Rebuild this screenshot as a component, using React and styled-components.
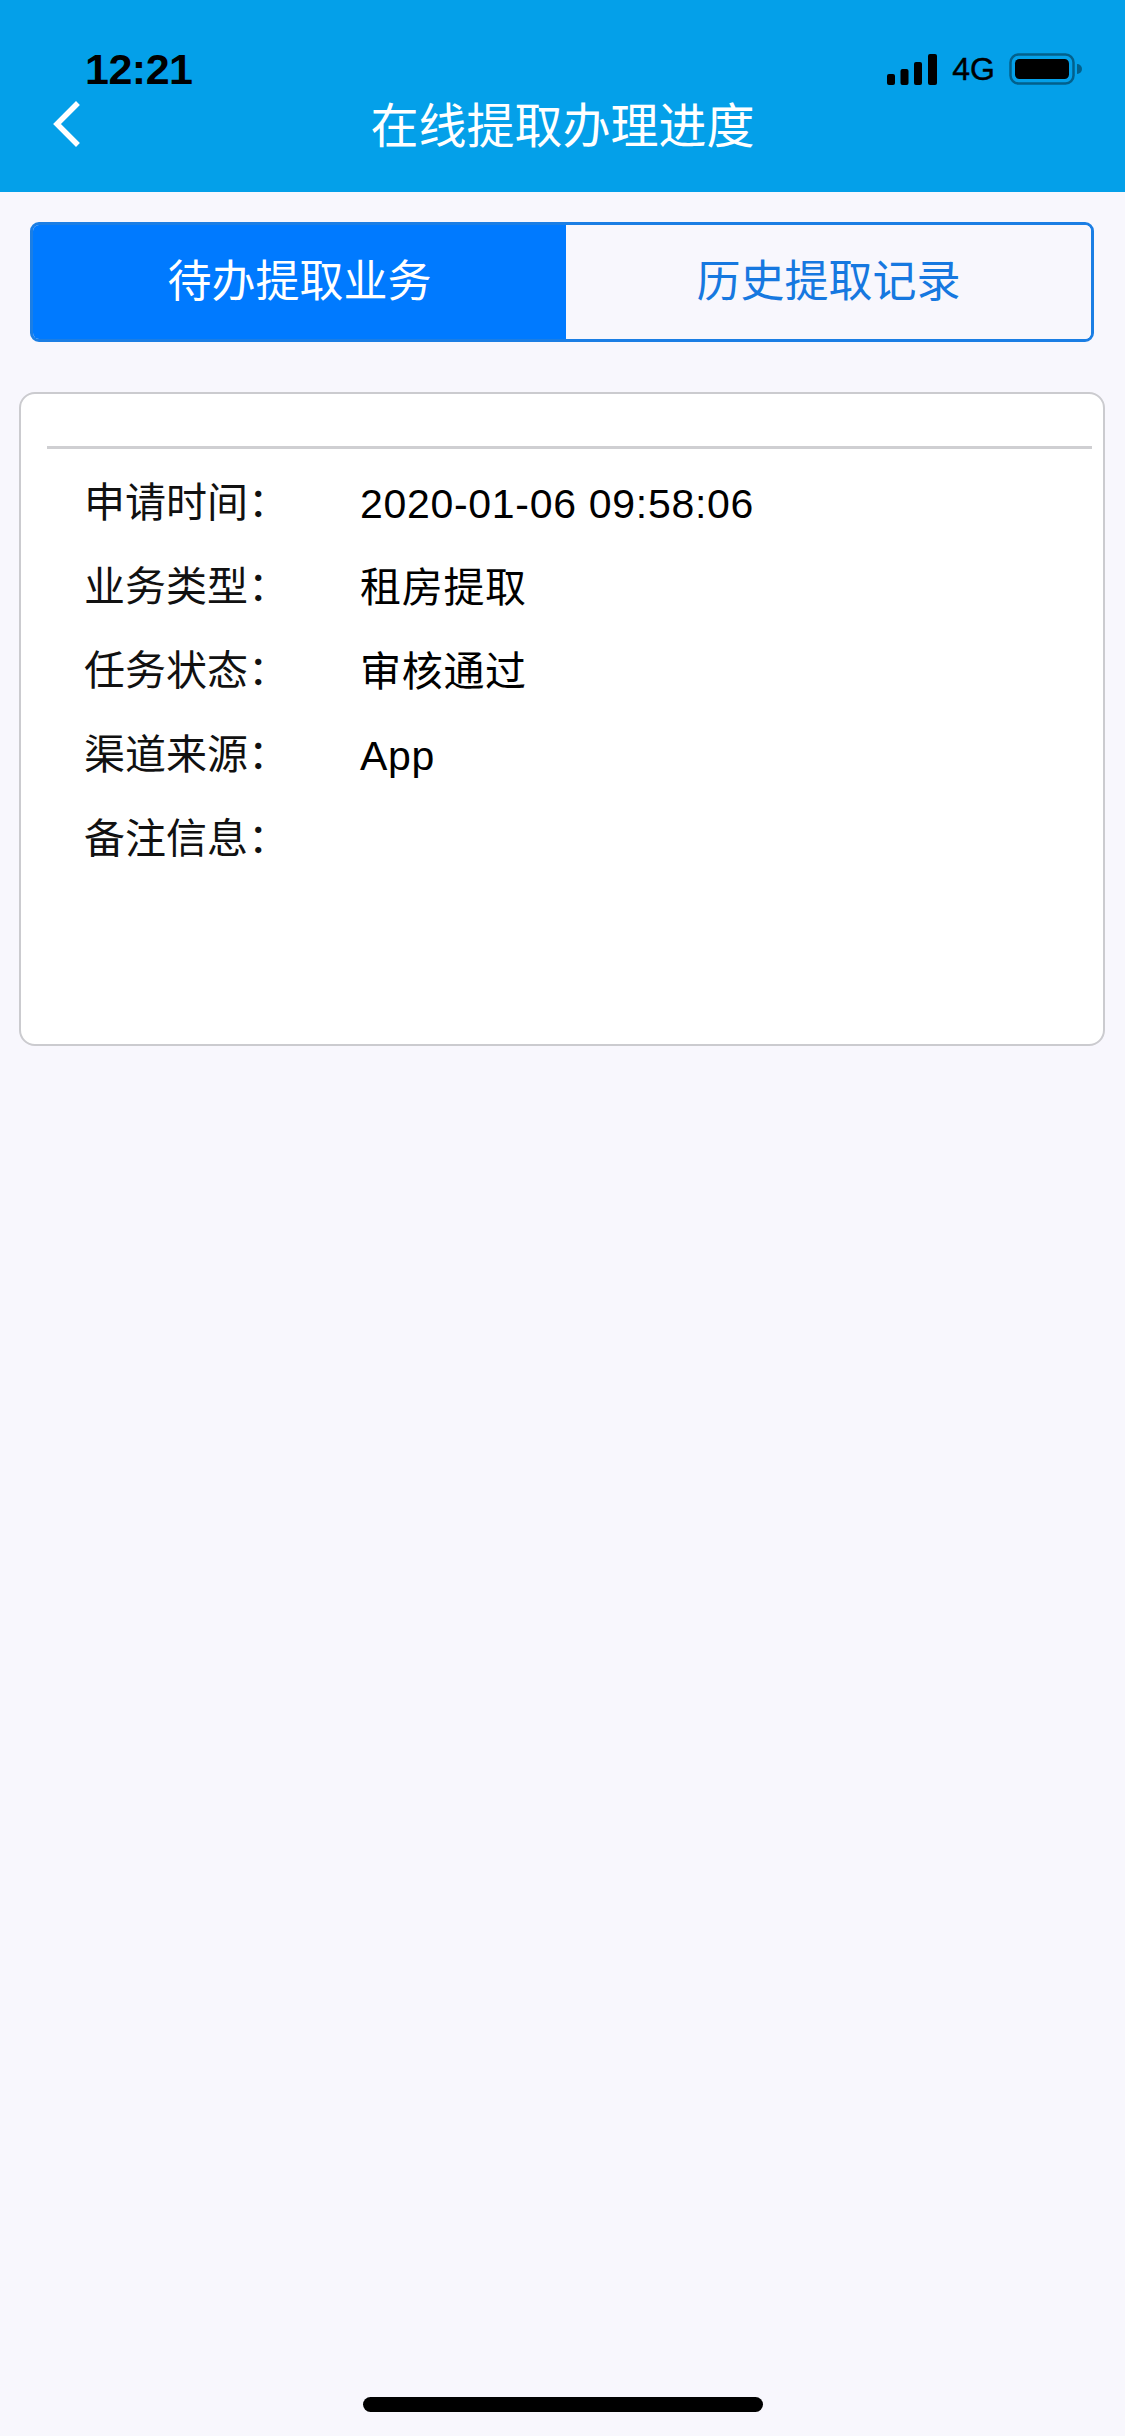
import React from 'react'
import styled, { createGlobalStyle } from 'styled-components'

const GlobalStyle = createGlobalStyle`
  html, body {
    margin: 0;
    padding: 0;
    background: #f8f7fd;
  }

  body {
    font-family: 'Liberation Sans', 'Noto Sans CJK SC', sans-serif;
    -webkit-font-smoothing: antialiased;
  }
`

const Screen = styled.div`
  min-height: 2436px;
  display: flex;
  flex-direction: column;
  background: #f8f7fd;
`

const Header = styled.header`
  background: #04a0e9;
  padding: 48px 0 34px;
  display: flex;
  flex-direction: column;
`

const StatusBar = styled.div`
  height: 42px;
  padding: 0 43px 0 85px;
  display: flex;
  align-items: center;
  justify-content: space-between;
`

const Clock = styled.span`
  font-size: 43px;
  font-weight: 700;
  letter-spacing: -0.5px;
  color: #000;
  line-height: 1;
`

const StatusIcons = styled.div`
  display: flex;
  align-items: center;
  gap: 14px;
`

const Network = styled.span`
  font-size: 32px;
  color: #000;
  line-height: 1;
  -webkit-text-stroke: 0.4px #000;
`

const NavBar = styled.div`
  height: 68px;
  display: grid;
  grid-template-columns: 1fr auto 1fr;
  align-items: center;
`

const BackButton = styled.button`
  justify-self: start;
  margin-left: 50px;
  padding: 0;
  border: 0;
  background: none;
  display: flex;
  cursor: pointer;
`

const Title = styled.h1`
  margin: 0;
  padding-top: 5px;
  font-size: 48px;
  font-weight: 400;
  color: #fff;
  line-height: 1;
`

const Tabs = styled.div`
  margin: 30px 31px 0 30px;
  height: 120px;
  display: flex;
  border: 3px solid #1b7ee4;
  border-radius: 9px;
  overflow: hidden;
  box-sizing: border-box;
`

const Tab = styled.div`
  flex: ${p => (p.$active ? '533 1 0' : '525 1 0')};
  display: flex;
  align-items: center;
  justify-content: center;
  font-size: 44px;
  line-height: 1;
  background: ${p => (p.$active ? '#007aff' : '#f8f7fd')};
  color: ${p => (p.$active ? '#fff' : '#1678e0')};
`

const Card = styled.section`
  margin: 50px 20px 0 19px;
  background: #fff;
  border: 2px solid #cbcbcf;
  border-radius: 16px;
  padding: 52px 11px 163px 26px;
`

const Divider = styled.hr`
  margin: 0;
  border: 0;
  height: 3px;
  background: #cfcfd2;
`

const InfoList = styled.dl`
  margin: 12px 0 0;
  padding-left: 37px;
  display: flex;
  flex-direction: column;
`

const InfoRow = styled.div`
  height: 84px;
  display: flex;
  align-items: center;
`

const Label = styled.dt`
  width: 276px;
  font-size: 41px;
  color: #111;
  line-height: 1;
`

const Value = styled.dd`
  margin: 0;
  padding-top: 3px;
  font-size: 41px;
  color: #000;
  line-height: 1;
  letter-spacing: 0.7px;
`

const Spacer = styled.div`
  flex: 1;
`

const HomeArea = styled.div`
  display: flex;
  justify-content: center;
  padding-bottom: 24px;
`

const HomeIndicator = styled.div`
  width: 400px;
  height: 15px;
  border-radius: 8px;
  background: #000;
`

function SignalIcon () {
  return (
    <svg width="51" height="31" viewBox="0 0 51 31">
      <rect x="0" y="20" width="8" height="11" rx="2" fill="#000" />
      <rect x="13.5" y="15" width="8" height="16" rx="2" fill="#000" />
      <rect x="27" y="8" width="8" height="23" rx="2" fill="#000" />
      <rect x="41" y="0" width="9" height="31" rx="2" fill="#000" />
    </svg>
  )
}

function BatteryIcon () {
  return (
    <svg width="73" height="32" viewBox="0 0 73 32">
      <rect x="1.5" y="1.5" width="63" height="29" rx="8" fill="none" stroke="rgba(0,0,0,0.4)" strokeWidth="2.5" />
      <rect x="6" y="6" width="54" height="20" rx="4.5" fill="#000" />
      <path d="M68 11 a3 3 0 0 1 0 10 z" fill="rgba(0,0,0,0.4)" />
    </svg>
  )
}

function BackIcon () {
  return (
    <svg width="32" height="46" viewBox="0 0 32 46">
      <path d="M26 4 L7 23 L26 42" fill="none" stroke="#fff" strokeWidth="5.5" strokeLinecap="square" />
    </svg>
  )
}

const rows = [
  { label: '申请时间：', value: '2020-01-06 09:58:06' },
  { label: '业务类型：', value: '租房提取' },
  { label: '任务状态：', value: '审核通过' },
  { label: '渠道来源：', value: 'App' },
  { label: '备注信息：', value: '' }
]

export default function App () {
  return (
    <Screen>
      <GlobalStyle />
      <Header>
        <StatusBar>
          <Clock>12:21</Clock>
          <StatusIcons>
            <SignalIcon />
            <Network>4G</Network>
            <BatteryIcon />
          </StatusIcons>
        </StatusBar>
        <NavBar>
          <BackButton aria-label="返回">
            <BackIcon />
          </BackButton>
          <Title>在线提取办理进度</Title>
          <span />
        </NavBar>
      </Header>

      <Tabs>
        <Tab $active>待办提取业务</Tab>
        <Tab>历史提取记录</Tab>
      </Tabs>

      <Card>
        <Divider />
        <InfoList>
          {rows.map(row => (
            <InfoRow key={row.label}>
              <Label>{row.label}</Label>
              <Value>{row.value}</Value>
            </InfoRow>
          ))}
        </InfoList>
      </Card>

      <Spacer />
      <HomeArea>
        <HomeIndicator />
      </HomeArea>
    </Screen>
  )
}
